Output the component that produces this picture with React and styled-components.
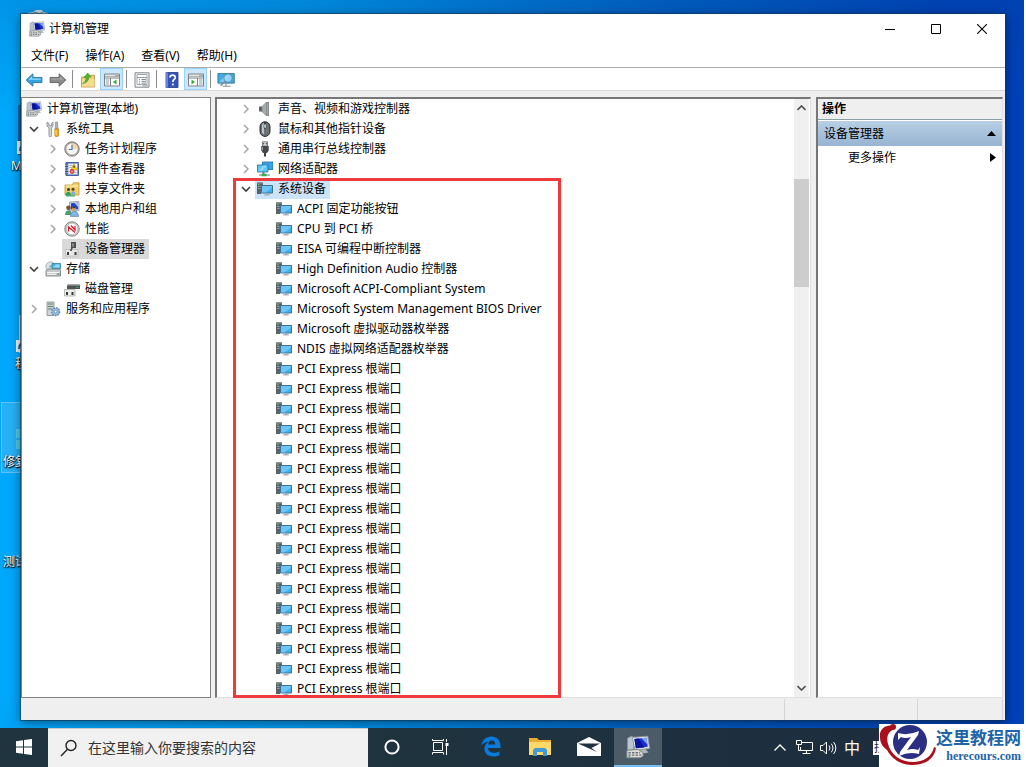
import React from 'react';
import styled, { createGlobalStyle, css } from 'styled-components';

const GlobalStyle = createGlobalStyle`
  * { box-sizing: border-box; }
  body {
    margin: 0;
    background: #fff;
    color: #000;
    font-family: "Noto Sans", "Noto Sans CJK SC", sans-serif;
    font-size: 12px;
    line-height: 20px;
  }
  button, input { font: inherit; color: inherit; }
`;

/* ---------- icons ---------- */

const Icon = ({ size = 16, children, ...rest }) => (
  <svg width={size} height={size} viewBox="0 0 16 16" aria-hidden="true" {...rest}>{children}</svg>
);

const ComputerIcon = ({ size = 16 }) => (
  <Icon size={size}>
    <path d="M1 2.2 3.600.8l1.600.8v8L1 10.200z" fill="#b9c6cf" stroke="#84929d" strokeWidth=".5" />
    <path d="M4.200 1.600 14.500.8l1.300 8.200-9.800 1.200z" fill="#dfe4e8" stroke="#8f98a2" strokeWidth=".6" />
    <path d="m5.600 2.600 8-.7.900 6-7.900.9z" fill="#1730d6" />
    <path d="m5.600 2.600 3-.3 3.600 6-5.600.5z" fill="#0a1499" />
    <path d="m10.200 2.200 3.400-.3.700 4.400z" fill="#7fa4ff" />
    <path d="m9 10 4-.5 2 2.200-4.500.8z" fill="#aeb5bb" />
    <path d="M.6 10.200 8 9.600l3.200 2 .3 2.400-2 1.200H.6z" fill="#d9dad6" stroke="#7a8288" strokeWidth=".6" />
    <path d="M1.600 11.800h7.800M1.600 13.400h8.600" stroke="#68727a" strokeWidth=".9" strokeDasharray="1.600 .8" />
    <circle cx="2.200" cy="14.400" r=".5" fill="#37b34a" />
  </Icon>
);

const ToolsIcon = () => (
  <Icon>
    <path d="M2 1v4l2 2v7.5a1.3 1.3 0 0 0 2.6 0V7L8 5V1L6.6 2.6v2H4v-2z" fill="#d5d8db" stroke="#7c8389" strokeWidth=".8" />
    <path d="M10.6 1h2l.3 7h-2.6z" fill="#aab0b5" stroke="#7c8389" strokeWidth=".6" />
    <path d="M9.8 8h3.8v6.2a1.9 1.4 0 0 1-3.8 0z" fill="#f5a81c" stroke="#b97809" strokeWidth=".7" />
    <path d="M11 9v5" stroke="#ffe08a" />
  </Icon>
);

const ClockIcon = () => (
  <Icon>
    <circle cx="8" cy="8" r="7.2" fill="#b2aea7" stroke="#77716a" strokeWidth=".9" />
    <circle cx="8" cy="8" r="5.6" fill="#f4f6f8" />
    <path d="M8 8h5.5A5.6 5.6 0 0 0 8 2.4z" fill="#f6d8a4" />
    <path d="M8 3.8V8.5H4.8" fill="none" stroke="#4678b8" strokeWidth="1.2" />
  </Icon>
);

const EventIcon = () => (
  <Icon>
    <path d="M2 1.5h12.5v13H2z" fill="#8ba6d8" stroke="#4a649c" />
    <path d="M4.500 3H13v10H4.500z" fill="#f2f4fb" />
    <path d="M5.500 4.500h3M5.500 6.500h2M10 11.500h2.500" stroke="#8393bb" strokeWidth=".8" />
    <path d="M1 3h3M1 5.5h3M1 8h3M1 10.5h3M1 13h3" stroke="#47536c" />
    <path d="M10 2.500 13.500 9H6.500z" fill="#ffd524" stroke="#b8910a" strokeWidth=".5" />
    <path d="M10 4.500v2.600" stroke="#222" strokeWidth="1.1" />
    <circle cx="8" cy="10.500" r="2.4" fill="#d53a3a" />
    <path d="m7.200 9.700 1.600 1.600m0-1.600-1.600 1.600" stroke="#fff" strokeWidth=".7" />
  </Icon>
);

const SharedIcon = () => (
  <Icon>
    <path d="M1 4h7l1.500-2.200H15V14H1z" fill="#f1cf69" stroke="#bd942c" strokeWidth=".8" />
    <path d="M2 5h12.500" stroke="#fff0b5" />
    <circle cx="4.500" cy="8.500" r="1.500" fill="#2d3c47" />
    <circle cx="9" cy="8.200" r="1.500" fill="#51422f" />
    <path d="M1.500 14.500c0-5 5.500-5 5.500 0z" fill="#2da164" />
    <path d="M7 13.500c0-4.500 4.500-4.500 4.500 0z" fill="#79acd8" />
    <path d="M2 14.800h9" stroke="#41b06e" strokeWidth="1.4" />
  </Icon>
);

const UsersIcon = () => (
  <Icon>
    <path d="M5.5 1 15 .5v9.2L5.5 10z" fill="#cfd6df" stroke="#818ba0" strokeWidth=".7" />
    <path d="M7 2.2 14 1.8v6.5L7 8.5z" fill="#2340c5" />
    <path d="m10.5 2 3.5-.2V6z" fill="#a4c0ff" />
    <circle cx="4.5" cy="6.7" r="2.3" fill="#745333" />
    <path d="M1 14c0-6.5 7-6.5 7 0z" fill="#4d9c75" />
    <circle cx="10" cy="8" r="2.2" fill="#d9a370" />
    <path d="M8 7.2a2.2 2.2 0 0 1 4.2 0z" fill="#4c3320" />
    <path d="M6.5 15.4c0-6.8 8-6.8 8 0z" fill="#86b6e5" stroke="#4276b3" strokeWidth=".6" />
  </Icon>
);

const GaugeIcon = () => (
  <Icon>
    <circle cx="8" cy="8" r="7.2" fill="#d9dbdb" stroke="#70716f" strokeWidth=".9" />
    <circle cx="8" cy="8" r="5.7" fill="#fff" stroke="#989898" strokeWidth=".5" />
    <path d="M4.500 10.500V6L11 11.500M7 4.500l4 4.500V5" fill="none" stroke="#d31e2c" strokeWidth="1.3" />
  </Icon>
);

const DeviceManagerIcon = () => (
  <Icon>
    <path d="M7 1h5v6H8.6v3H7z" fill="#4c5053" />
    <path d="M8 2.5h2v3H8z" fill="#858a8d" />
    <path d="M1.5 8.5h12.5v6.5H1.5z" fill="#e8e8e6" stroke="#acaeac" strokeWidth=".6" />
    <path d="M3 11h2v3H3zM10.5 11h2v3h-2z" fill="#35383a" />
    <path d="M7 8v2" stroke="#34393c" strokeWidth="1.5" />
  </Icon>
);

const StorageIcon = () => (
  <Icon>
    <circle cx="5.5" cy="5.5" r="4.6" fill="#dfe5e9" stroke="#929b9f" strokeWidth=".8" />
    <circle cx="5.5" cy="5.5" r="1.4" fill="#8eb9b0" />
    <path d="M7 2.5h8.5v5H7z" fill="#49afe4" stroke="#317fa9" strokeWidth=".8" />
    <path d="m8 6.5 3-3h3.5v3z" fill="#9adcff" />
    <path d="M1 9.5 3 8h12l.5 1.5V15H1z" fill="#c4c9c9" stroke="#707878" strokeWidth=".8" />
    <path d="M2 11.5h12M2 13.3h9" stroke="#f5f6f6" />
    <path d="M12 13h2.5" stroke="#50a45d" strokeWidth="1.3" />
  </Icon>
);

const DiskIcon = () => (
  <Icon>
    <path d="M3 4.500 4.500 3H15l1 1.500V8H3z" fill="#4f5454" />
    <path d="M3 4.500 4.500 3H15l1 1.500z" fill="#a6aca9" />
    <path d="M12 6.300h2.500" stroke="#31b36a" />
    <path d="M.5 8.5h10.5V15H.5z" fill="#ecece9" stroke="#9fa29e" strokeWidth=".7" />
    <path d="M2 11h2v3H2zM7.5 11h2v3h-2z" fill="#3a3c3c" />
  </Icon>
);

const ServicesIcon = () => (
  <Icon>
    <path d="M2 1h7v13.5H2z" fill="#cdd4d4" stroke="#7e8989" strokeWidth=".8" />
    <path d="M3 3h5M3 5.5h5M3 8h4" stroke="#667d79" strokeWidth="1.1" />
    <circle cx="10.7" cy="10.7" r="3.9" fill="#9fbcdc" stroke="#5586b5" strokeWidth="1.4" strokeDasharray="1.6 1" />
    <circle cx="10.7" cy="10.7" r="1.4" fill="#fff" stroke="#5586b5" strokeWidth=".8" />
  </Icon>
);

const SpeakerIcon = () => (
  <Icon>
    <path d="M2 5.500h3v5H2z" fill="#5f6466" />
    <path d="m5 5.500 4.500-4.500v14L5 10.500z" fill="#a8acae" stroke="#6f7476" strokeWidth=".6" />
    <path d="M9.500 1H12v14H9.500z" fill="#7b8083" />
    <path d="M10.700 1.500v13" stroke="#b8bcbe" strokeWidth=".8" />
  </Icon>
);

const MouseIcon = () => (
  <Icon>
    <rect x="3" y=".8" width="10" height="14.6" rx="5" fill="#6d7275" stroke="#26292b" />
    <path d="M5 4a3 3 0 0 1 2-2v11.5a3.5 3.5 0 0 1-2-3z" fill="#bfc5c8" />
    <path d="M8 1v7" stroke="#1f2426" />
    <rect x="7" y="3" width="2.2" height="4.2" rx="1" fill="#d6eefb" stroke="#222" strokeWidth=".5" />
  </Icon>
);

const UsbIcon = () => (
  <Icon>
    <path d="M5.5.8h5V5h-5z" fill="#dfe1e1" stroke="#666" strokeWidth=".8" />
    <path d="M6.7 2v1.4M9.3 2v1.4" stroke="#333" />
    <path d="M4.3 5h7.4v4.5L10 12H6l-1.7-2.5z" fill="#46494b" />
    <path d="M5.5 6v3.5" stroke="#95999b" />
    <path d="M7 12h2v3.5H7z" fill="#3c3e40" />
  </Icon>
);

const NetworkIcon = () => (
  <Icon>
    <path d="M5.5 1H16v7.5H5.5z" fill="#37a5e7" stroke="#216c9c" strokeWidth=".8" />
    <path d="M.5 4H11v7H.5z" fill="#61c4f8" stroke="#216c9c" strokeWidth=".8" />
    <path d="m1.3 10 5-5.4H10L4.5 10z" fill="#8ddaff" />
    <path d="M6.5 11v2" stroke="#6d7a80" strokeWidth="2" />
    <path d="M2 14h11" stroke="#6d7a80" />
    <path d="M4.5 12.8h5v2.5h-5z" fill="#36b24b" />
  </Icon>
);

const SystemDeviceIcon = () => (
  <Icon>
    <path d="M0 1h6v4H4v8H0z" fill="#5b6266" />
    <path d="M0 1h6v1.500H0z" fill="#8d969a" />
    <path d="M1 5.500h2.500M1 7.500h2.500" stroke="#a3acb0" strokeWidth=".8" />
    <path d="M1 3.500h1.500" stroke="#45cf62" />
    <path d="M4.500 4.500h11v7.500h-11z" fill="#42aff0" stroke="#3f6f8e" />
    <path d="M5 5h10v1.500L8.500 11.500H5z" fill="#6cc6f9" />
    <path d="M8 12.500h4v1H8zM7 13.500h6v1H7z" fill="#a5b3ba" />
  </Icon>
);

const BackIcon = () => (
  <Icon size={18}>
    <path d="M1 8 7 2.5v3.2h8v4.6H7v3.2z" fill="#35a5e2" stroke="#26719f" strokeWidth=".8" strokeLinejoin="round" />
    <path d="M3 7.7 6.3 4.6v2.1h7.7v1z" fill="#91d9fb" />
  </Icon>
);

const ForwardIcon = () => (
  <Icon size={18}>
    <path d="M15 8 9 2.5v3.2H1v4.6h8v3.2z" fill="#8b8b8b" stroke="#5d5d5d" strokeWidth=".8" strokeLinejoin="round" />
    <path d="M2 6.6h8V4.7L13 7.5H2z" fill="#aaa" />
  </Icon>
);

const FolderUpIcon = () => (
  <Icon>
    <path d="M1.5 5h5L8 3.3h6.5V15h-13z" fill="#efcb79" stroke="#bd933d" strokeWidth=".8" />
    <path d="M2 14.500V7.200h12.500v7.300z" fill="#f9dc93" />
    <path d="M2.500 11.500C4.700 10.500 6 8.500 6.200 5.400L4 5.600 7.700 1 11 5l-2.200.1C8.500 9 6.500 11.300 2.500 11.500z" fill="#4dba2c" stroke="#2f8417" strokeWidth=".5" />
  </Icon>
);

const PaneIcon = ({ flip }) => (
  <Icon>
    <path d="M.5 2h15v12H.5z" fill="#fff" stroke="#7c8386" />
    <path d="M1 2.5h14V5H1z" fill="#a8adb0" />
    <path d="M1 3.7h10" stroke="#fff" strokeWidth=".8" />
    <path d="M1 6h14" stroke="#7c8386" />
    {flip ? (
      <>
        <path d="M9.5 6v8" stroke="#7c8386" />
        <path d="M11 8h3.5M11 10h3.5M11 12h3.5" stroke="#75848c" strokeWidth=".8" />
        <path d="m3.5 7.6 3.6 2.5-3.6 2.5z" fill="#3caa35" />
      </>
    ) : (
      <>
        <path d="M6.5 6v8" stroke="#7c8386" />
        <path d="M1.7 8h3.5M1.7 10h3.5M1.7 12h3.5" stroke="#75848c" strokeWidth=".8" />
        <path d="M12.5 7.6 8.9 10.1l3.6 2.5z" fill="#3caa35" />
      </>
    )}
  </Icon>
);

const PropertiesIcon = () => (
  <Icon>
    <path d="M1 .8h14v14.4H1z" fill="#f6f7f7" stroke="#80878b" />
    <path d="M3 2.5h10v3H3zM3 5.5h10v7H3z" fill="#fff" stroke="#8d9498" strokeWidth=".8" />
    <path d="M5 7.5h1M7.5 7.5H12M5 9.3h1M7.5 9.3H12M5 11.1h1M7.5 11.1H12" stroke="#666f74" strokeWidth=".8" />
    <path d="M8.5 13.8H14" stroke="#9ba2a5" />
  </Icon>
);

const HelpIcon = () => (
  <Icon>
    <path d="M2 .5h12v15H2z" fill="#3551ba" stroke="#263b8b" strokeWidth=".8" />
    <path d="M2 .5h2v15H2z" fill="#6b82d8" />
    <path d="M6 5.5C6 2.4 11.3 2.2 11.3 5.4c0 2-2.5 2.2-2.5 4.6" fill="none" stroke="#fff" strokeWidth="1.7" />
    <path d="M7.9 11.6h1.8v1.8H7.9z" fill="#fff" />
  </Icon>
);

const ScanIcon = () => (
  <Icon size={18}>
    <path d="M.8 2.2h14.6v8.6H.8z" fill="#3faae6" stroke="#3f7898" strokeWidth=".8" />
    <path d="m2 10 6-7h4l-6 7z" fill="#82cff7" />
    <circle cx="9.8" cy="6.3" r="3.7" fill="#a9ddf8" fillOpacity=".8" stroke="#5c91af" strokeWidth=".9" />
    <path d="m7.2 9-4 4" stroke="#6f97aa" strokeWidth="1.5" />
    <path d="M5 13.5h7M8 11v2" stroke="#849299" />
  </Icon>
);

const Chevron = ({ open }) => (
  <svg width="10" height="10" viewBox="0 0 10 10" aria-hidden="true">
    {open
      ? <path d="m1 3 4 4 4-4" fill="none" stroke="#404040" strokeWidth="1.6" />
      : <path d="m3 1 4 4-4 4" fill="none" stroke="#a6a6a6" strokeWidth="1.5" />}
  </svg>
);

/* ---------- desktop ---------- */

const Desktop = styled.main`
  position: relative;
  display: flex;
  flex-direction: column;
  height: 100vh;
  margin-right: 2px;
  overflow: hidden;
  background:
    linear-gradient(180deg, rgba(0, 70, 150, 0.2), transparent 15%, transparent 90%, rgba(0, 70, 150, 0.1)),
    linear-gradient(90deg, #00a8fb 0, #0098ec 30%, #0060c4 65%, #0042b8 92%, #0040ba 100%);
`;

const Shortcut = styled.div`
  position: absolute;
  top: ${({ $top }) => $top}px;
  left: ${({ $left }) => $left}px;
  width: 74px;
  height: 71px;
  display: flex;
  flex-direction: column;
  justify-content: flex-end;
  padding-left: ${({ $inset }) => $inset}px;
  color: #fff;
  white-space: nowrap;
  text-shadow: 0 1px 2px #000, 1px 1px 1px #000;
  ${({ $selected }) => $selected && css`
    border: 1px solid #63c2f2;
    background: rgba(130, 200, 240, 0.3);
  `}
`;

const ShortcutArt = styled.svg`
  position: absolute;
  top: 0;
  left: 14px;
`;

const RecycleBinArt = styled.svg`
  position: absolute;
  top: 8px;
  left: 27px;
`;

/* ---------- window ---------- */

const Window = styled.section`
  position: relative;
  flex: 1;
  min-height: 0;
  display: flex;
  flex-direction: column;
  margin: 14px 19px 8px 21px;
  background: #efefef;
  box-shadow: 0 0 0 1px rgba(20, 50, 80, 0.6), 0 2px 10px rgba(0, 0, 0, 0.5);
`;

const TitleBar = styled.header`
  display: flex;
  align-items: center;
  height: 30px;
  padding-left: 8px;
  gap: 4px;
  background: #fff;
`;

const Title = styled.h1`
  flex: 1;
  margin: 0;
  font-size: 12px;
  font-weight: 400;
`;

const CaptionButtons = styled.div`
  display: flex;
`;

const CaptionButton = styled.button`
  display: grid;
  place-items: center;
  width: 46px;
  height: 28px;
  padding: 0;
  border: 0;
  background: transparent;
`;

const MenuBar = styled.nav`
  display: flex;
  gap: 1px;
  height: 24px;
  padding: 0 2px;
  border-bottom: 1px solid #aab0b0;
  background: #fff;
`;

const MenuButton = styled.button`
  padding: 0 8px;
  border: 0;
  background: transparent;
  &:hover { background: #e5f3ff; }
`;

const Toolbar = styled.div`
  display: flex;
  align-items: center;
  gap: 1px;
  height: 23px;
  padding-left: 1px;
  border-bottom: 1px solid #dadada;
  background: #fff;
`;

const ToolButton = styled.button`
  display: grid;
  place-items: center;
  width: 23px;
  height: 22px;
  padding: 2px 0 0;
  border: 1px solid ${({ $active }) => ($active ? '#99d1ff' : 'transparent')};
  background: ${({ $active }) => ($active ? '#cce8ff' : 'transparent')};
`;

const ToolDivider = styled.span`
  width: 1px;
  height: 18px;
  margin: 0 2px;
  background: #8c8c8c;
`;

const Body = styled.div`
  flex: 1;
  min-height: 0;
  display: flex;
  padding: 6px 2px 0 0;
`;

const TreePane = styled.aside`
  width: 190px;
  margin-right: 4px;
  padding: 1px 0 0 2px;
  border: 1px solid #828282;
  background: #fff;
  overflow: hidden;
`;

const DevicePane = styled.section`
  position: relative;
  flex: 1;
  min-width: 0;
  display: flex;
  margin-right: 5px;
  border: 1px solid #e0e0e0;
  border-top: 2px solid #777;
  border-left: 2px solid #777;
  background: #fff;
`;

const DeviceScroll = styled.div`
  flex: 1;
  min-width: 0;
  overflow: hidden;
`;

const Tree = styled.ul`
  margin: 0;
  padding: 0;
  list-style: none;
`;

const TreeRow = styled.li`
  display: flex;
  height: 20px;
  padding-left: ${({ $depth }) => Math.max($depth - 1, 0) * 19}px;
  white-space: nowrap;
`;

const Toggle = styled.button`
  display: grid;
  place-items: center;
  width: 19px;
  padding: 0;
  border: 0;
  background: transparent;
`;

const ToggleSpace = styled.span`
  width: 19px;
`;

const TreeLabel = styled.span`
  display: flex;
  align-items: center;
  gap: 5px;
  padding: 0 4px 0 2px;
  background: ${({ $tone }) => $tone || 'transparent'};
`;

const Highlight = styled.div`
  position: absolute;
  top: 79px;
  bottom: -1px;
  left: 16px;
  width: 328px;
  border: 3px solid #ed3b3d;
  pointer-events: none;
`;

const ScrollTrack = styled.div`
  display: flex;
  flex-direction: column;
  width: 15px;
  margin-right: 1px;
  background: #f0f0f0;
`;

const ScrollButton = styled.button`
  display: grid;
  place-items: center;
  height: 18px;
  padding: 0;
  border: 0;
  background: transparent;
`;

const ScrollThumb = styled.div`
  height: 108px;
  margin: 62px 0 auto;
  background: #cdcdcd;
`;

const ActionsPane = styled.aside`
  width: 187px;
  border: 1px solid #e0e0e0;
  border-top: 2px solid #777;
  border-left: 2px solid #777;
  background: #fff;
`;

const ActionsHeading = styled.h2`
  height: 21px;
  margin: 0 0 1px;
  padding-left: 4px;
  border-bottom: 1px solid #8aa0a8;
  background: #efefef;
  font-size: 12px;
  font-weight: 700;
`;

const ActionGroup = styled.button`
  display: flex;
  align-items: center;
  justify-content: space-between;
  width: 100%;
  height: 25px;
  padding: 0 6px;
  border: 0;
  background: linear-gradient(#b8cfe4, #98b4d2);
`;

const ActionItem = styled(ActionGroup)`
  height: 23px;
  padding-left: 30px;
  background: transparent;
`;

const StatusBar = styled.footer`
  display: flex;
  justify-content: flex-end;
  height: 22px;
  padding: 1px 2px 0 0;
`;

const StatusCell = styled.span`
  width: ${({ $width }) => $width}px;
  border-left: 1px solid #d5d5d5;
`;

/* ---------- taskbar ---------- */

const Taskbar = styled.footer`
  position: relative;
  display: flex;
  height: 39px;
  background: linear-gradient(90deg, #20343f, #1f333f 45%, #1c2b3f);
  color: #fff;
`;

const TaskButton = styled.button`
  display: grid;
  place-items: center;
  width: 48px;
  padding: 0;
  border: 0;
  border-bottom: 2px solid ${({ $active }) => ($active ? '#76b9ed' : 'transparent')};
  background: ${({ $active }) => ($active ? '#4b5b68' : 'transparent')};
`;

const SearchBox = styled.label`
  display: flex;
  align-items: center;
  gap: 10px;
  width: 320px;
  padding: 0 12px;
  border-top: 1px solid #c9cccd;
  background: #f1f1f1;
`;

const SearchInput = styled.input`
  flex: 1;
  min-width: 0;
  padding: 0;
  border: 0;
  outline: 0;
  background: transparent;
  font-size: 14px;
  &::placeholder { color: #333; opacity: 1; }
`;

const PinnedApps = styled.div`
  display: flex;
  gap: 1px;
  margin-left: 3px;
`;

const Tray = styled.div`
  display: flex;
  align-items: center;
  margin-left: auto;
  margin-right: 132px;
`;

const TrayButton = styled.button`
  display: grid;
  place-items: center;
  width: 24px;
  height: 39px;
  padding: 0;
  border: 0;
  background: transparent;
  font-size: 16px;
`;

const ImeMode = styled(TrayButton)`
  margin-left: 4px;
`;

const ImeBadge = styled.span`
  width: 14px;
  height: 14px;
  background: #fff;
  color: #1c2b3f;
  font-size: 12px;
  line-height: 14px;
`;

const Watermark = styled.div`
  position: absolute;
  right: 0;
  bottom: 0;
  display: flex;
  align-items: center;
  width: 145px;
  height: 43px;
  background: #fff;
  white-space: nowrap;
`;

const WatermarkText = styled.div`
  display: flex;
  flex-direction: column;
  align-items: flex-end;
  padding-right: 3px;
`;

const SiteName = styled.strong`
  color: #1d64a8;
  font-size: 17px;
  line-height: 20px;
`;

const SiteUrl = styled.span`
  color: #1d64a8;
  font-family: "Liberation Serif", serif;
  font-size: 12px;
  font-weight: 700;
  line-height: 16px;
`;

/* ---------- data ---------- */

const consoleTree = [
  { depth: 0, icon: ComputerIcon, label: '计算机管理(本地)' },
  { depth: 1, icon: ToolsIcon, label: '系统工具', open: true },
  { depth: 2, icon: ClockIcon, label: '任务计划程序', open: false },
  { depth: 2, icon: EventIcon, label: '事件查看器', open: false },
  { depth: 2, icon: SharedIcon, label: '共享文件夹', open: false },
  { depth: 2, icon: UsersIcon, label: '本地用户和组', open: false },
  { depth: 2, icon: GaugeIcon, label: '性能', open: false },
  { depth: 2, icon: DeviceManagerIcon, label: '设备管理器', tone: '#d9d9d9' },
  { depth: 1, icon: StorageIcon, label: '存储', open: true },
  { depth: 2, icon: DiskIcon, label: '磁盘管理' },
  { depth: 1, icon: ServicesIcon, label: '服务和应用程序', open: false },
];

const systemDevices = [
  'ACPI 固定功能按钮',
  'CPU 到 PCI 桥',
  'EISA 可编程中断控制器',
  'High Definition Audio 控制器',
  'Microsoft ACPI-Compliant System',
  'Microsoft System Management BIOS Driver',
  'Microsoft 虚拟驱动器枚举器',
  'NDIS 虚拟网络适配器枚举器',
  ...Array(17).fill('PCI Express 根端口'),
];

const deviceTree = [
  { depth: 2, icon: SpeakerIcon, label: '声音、视频和游戏控制器', open: false },
  { depth: 2, icon: MouseIcon, label: '鼠标和其他指针设备', open: false },
  { depth: 2, icon: UsbIcon, label: '通用串行总线控制器', open: false },
  { depth: 2, icon: NetworkIcon, label: '网络适配器', open: false },
  { depth: 2, icon: SystemDeviceIcon, label: '系统设备', open: true, tone: '#cce4f9' },
  ...systemDevices.map((label) => ({ depth: 3, icon: SystemDeviceIcon, label })),
];

const menus = ['文件(F)', '操作(A)', '查看(V)', '帮助(H)'];

const TreeView = ({ items, name }) => (
  <Tree role="tree" aria-label={name}>
    {items.map(({ depth, icon: ItemIcon, label, open, tone }, i) => (
      <TreeRow key={i} role="treeitem" aria-level={depth + 1} aria-expanded={open} $depth={depth}>
        {open !== undefined && <Toggle aria-label={label}><Chevron open={open} /></Toggle>}
        {open === undefined && depth > 0 && <ToggleSpace />}
        <TreeLabel $tone={tone}><ItemIcon />{label}</TreeLabel>
      </TreeRow>
    ))}
  </Tree>
);

const ManagementWindow = () => (
  <Window>
    <TitleBar>
      <ComputerIcon />
      <Title>计算机管理</Title>
      <CaptionButtons>
        <CaptionButton aria-label="最小化">
          <svg width="10" height="10"><path d="M0 5.5h10" stroke="#000" /></svg>
        </CaptionButton>
        <CaptionButton aria-label="最大化">
          <svg width="10" height="10"><path d="M.5.5h9v9h-9z" fill="none" stroke="#000" /></svg>
        </CaptionButton>
        <CaptionButton aria-label="关闭">
          <svg width="10" height="10"><path d="m0 0 10 10M10 0 0 10" stroke="#000" strokeWidth="1.1" /></svg>
        </CaptionButton>
      </CaptionButtons>
    </TitleBar>
    <MenuBar>
      {menus.map((menu) => <MenuButton key={menu}>{menu}</MenuButton>)}
    </MenuBar>
    <Toolbar>
      <ToolButton aria-label="后退"><BackIcon /></ToolButton>
      <ToolButton aria-label="前进"><ForwardIcon /></ToolButton>
      <ToolDivider />
      <ToolButton aria-label="上一级"><FolderUpIcon /></ToolButton>
      <ToolButton aria-label="控制台树" $active><PaneIcon /></ToolButton>
      <ToolDivider />
      <ToolButton aria-label="属性"><PropertiesIcon /></ToolButton>
      <ToolDivider />
      <ToolButton aria-label="帮助"><HelpIcon /></ToolButton>
      <ToolButton aria-label="操作窗格" $active><PaneIcon flip /></ToolButton>
      <ToolDivider />
      <ToolButton aria-label="扫描"><ScanIcon /></ToolButton>
    </Toolbar>
    <Body>
      <TreePane><TreeView items={consoleTree} name="控制台" /></TreePane>
      <DevicePane>
        <DeviceScroll><TreeView items={deviceTree} name="设备" /></DeviceScroll>
        <ScrollTrack>
          <ScrollButton aria-label="向上">
            <svg width="9" height="6"><path d="m.5 5 4-4 4 4" fill="none" stroke="#505050" strokeWidth="1.6" /></svg>
          </ScrollButton>
          <ScrollThumb />
          <ScrollButton aria-label="向下">
            <svg width="9" height="6"><path d="m.5 1 4 4 4-4" fill="none" stroke="#505050" strokeWidth="1.6" /></svg>
          </ScrollButton>
        </ScrollTrack>
        <Highlight />
      </DevicePane>
      <ActionsPane>
        <ActionsHeading>操作</ActionsHeading>
        <ActionGroup>
          设备管理器
          <svg width="9" height="5"><path d="M0 5 4.5 0 9 5z" /></svg>
        </ActionGroup>
        <ActionItem>
          更多操作
          <svg width="6" height="9"><path d="m0 0 6 4.5L0 9z" /></svg>
        </ActionItem>
      </ActionsPane>
    </Body>
    <StatusBar>
      <StatusCell $width={133} />
      <StatusCell $width={85} />
      <StatusCell $width={1} />
    </StatusBar>
  </Window>
);

const App = () => (
  <>
    <GlobalStyle />
    <Desktop>
      <RecycleBinArt width="22" height="8">
        <path d="M1 8V5l5-1 3-2h6l1 2 5 1v3z" fill="#c3d3dc" />
        <path d="m4 6 5-2 3 2 4-2" fill="none" stroke="#5b7f96" />
      </RecycleBinArt>
      <Shortcut $top={105} $left={2} $inset={9}>
        <ShortcutArt width="40" height="50">
          <path d="M2 0h38v50H2z" fill="#0961b8" />
          <path d="M1 36h13v13H1z" fill="#f0f4f6" />
          <path d="M4 46c0-4 2-6 5-6" fill="none" stroke="#1c63a8" strokeWidth="2" />
        </ShortcutArt>
        Microsoft
      </Shortcut>
      <Shortcut $top={303} $left={2} $inset={13}>
        <ShortcutArt width="40" height="50">
          <path d="M3 12h30v38H3z" fill="#d9c8c8" />
          <path d="M0 37h12v12H0z" fill="#f0f4f6" />
          <path d="M3 46c0-4 2-6 5-6" fill="none" stroke="#1c63a8" strokeWidth="2" />
        </ShortcutArt>
        程序
      </Shortcut>
      <Shortcut $top={402} $left={1} $inset={1} $selected>
        <ShortcutArt width="40" height="50">
          <path d="M0 26h5v9H0zM0 37h5v9H0z" fill="#4ecbe8" />
          <path d="M5 24h20v22H5z" fill="#0878b4" />
        </ShortcutArt>
        修复
      </Shortcut>
      <Shortcut $top={501} $left={1} $inset={2}>测试</Shortcut>
      <ManagementWindow />
      <Taskbar>
        <TaskButton aria-label="开始">
          <svg width="16" height="16" viewBox="0 0 16 16" fill="#fff">
            <path d="M0 2.3 7 1.3v6.2H0zM8 1.1 16 0v7.5H8zM0 8.5h7v6.2l-7-1zM8 8.5h8V16l-8-1.1z" />
          </svg>
        </TaskButton>
        <SearchBox>
          <svg width="18" height="18" viewBox="0 0 18 18" fill="none" stroke="#222" strokeWidth="1.4">
            <circle cx="11" cy="6.5" r="5" />
            <path d="M7.5 10.3 1 17" />
          </svg>
          <SearchInput type="text" aria-label="搜索" placeholder="在这里输入你要搜索的内容" />
        </SearchBox>
        <TaskButton aria-label="Cortana">
          <svg width="16" height="16"><circle cx="8" cy="8" r="6.6" fill="none" stroke="#fff" strokeWidth="2" /></svg>
        </TaskButton>
        <TaskButton aria-label="任务视图">
          <svg width="17" height="16" fill="none" stroke="#fff">
            <path d="M1.5 3.5h9v8h-9zM.5 0v1.5h11V0M.5 15.5v-2h11v2M14.5 0v3M14.5 7v9" />
            <path d="M13.5 4h3v3h-3z" fill="#fff" stroke="none" />
          </svg>
        </TaskButton>
        <PinnedApps>
          <TaskButton aria-label="Edge">
            <svg width="20" height="21" viewBox="0 0 20 21">
              <path d="M.5 9.5C1.2 4 5 .5 10.4.5c5.7 0 9.1 4 9.1 9.5v2H7c.2 3.2 2.7 4.7 5.8 4.7 2 0 4-.5 5.6-1.5v4c-1.7.9-3.8 1.3-6 1.3-5.8 0-9-3.3-9-7.7 0-3.2 1.8-5.9 4.7-7.3C4.8 5.8 2.2 7.2.5 9.5zM7.2 8.4h7c0-2.4-1.2-3.800-3.300-3.800s-3.300 1.500-3.700 3.800z" fill="#0a7bda" />
            </svg>
          </TaskButton>
          <TaskButton aria-label="文件资源管理器">
            <svg width="22" height="18" viewBox="0 0 22 18">
              <path d="M0 0h8l2 2h12v15H0z" fill="#e8ad32" />
              <path d="M0 4h22v13H0z" fill="#ffd968" />
              <path d="M4 18v-6l2-2h10l2 2v6h-4v-4H8v4z" fill="#3f9bd6" />
            </svg>
          </TaskButton>
          <TaskButton aria-label="邮件">
            <svg width="24" height="19" viewBox="0 0 24 19">
              <path d="M0 6 12 0l12 6v13H0z" fill="#fff" />
              <path d="M1 6.5h22l-8.500 4.500 5.500 4z" fill="#20323f" />
            </svg>
          </TaskButton>
          <TaskButton aria-label="计算机管理" $active><ComputerIcon size={24} /></TaskButton>
        </PinnedApps>
        <Tray>
          <TrayButton aria-label="显示隐藏的图标">
            <svg width="12" height="7" fill="none" stroke="#fff" strokeWidth="1.3"><path d="M.5 6.5 6 1l5.500 5.500" /></svg>
          </TrayButton>
          <TrayButton aria-label="网络">
            <svg width="17" height="15" fill="none" stroke="#fff">
              <path d="M6 2.5h10.5v8H4.5V7M10.5 10.5v3M6.5 13.5h8M.5.5h5v4h-5zM2.5 4.5v6h2" />
            </svg>
          </TrayButton>
          <TrayButton aria-label="音量">
            <svg width="17" height="14" fill="none" stroke="#fff">
              <path d="M.5 4.5H3L6.500 1v12L3 9.500H.5zM9 4.500q2 2.500 0 5M11.300 2.700q3.300 4.300 0 8.600M13.600 1q4.500 6 0 12" />
            </svg>
          </TrayButton>
          <TrayButton>中</TrayButton>
          <ImeMode><ImeBadge>拼</ImeBadge></ImeMode>
        </Tray>
        <Watermark>
          <svg width="57" height="43" viewBox="0 0 57 43">
            <path d="M15 2C7 0 0 5 1 13c0 6 3 10 7 13 5 9 14 15 25 15 12 0 22-5 24-17l-2-1c-2 10-11 15-21 15C22 38 12 31 9 20c-2-7 0-12 6-15z" fill="#a9101c" />
            <circle cx="14" cy="3" r="3" fill="#a9101c" />
            <ellipse cx="31" cy="18" rx="17" ry="17" fill="#2b2f83" />
            <path d="M19 9q10 3 21-2l-1 4-11 15q6-2 11 0l2-3-1 7q-10-3-20 2l1-4 11-15q-6 2-10 0l-3 3z" fill="#fff" />
          </svg>
          <WatermarkText>
            <SiteName>这里教程网</SiteName>
            <SiteUrl>herecours.com</SiteUrl>
          </WatermarkText>
        </Watermark>
      </Taskbar>
    </Desktop>
  </>
);

export default App;
